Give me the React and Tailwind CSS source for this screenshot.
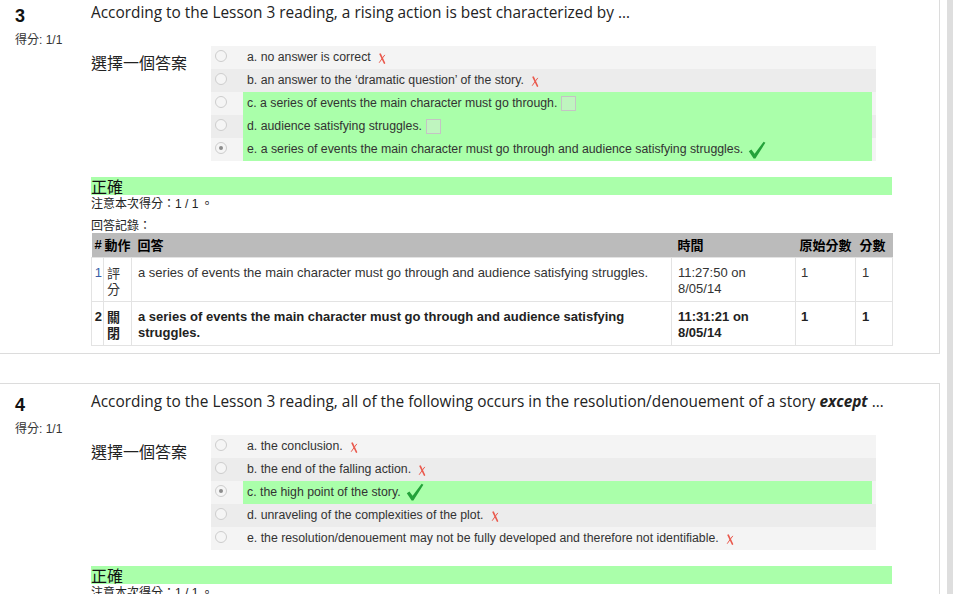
import React from "react";

const SANS = { fontFamily: '"Liberation Sans", Arial, "Noto Sans CJK TC", sans-serif' };
const OPEN = { fontFamily: '"Open Sans", "Noto Sans CJK TC", sans-serif' };
const CJK = { fontFamily: '"Noto Sans CJK TC", "Liberation Sans", sans-serif' };

function Radio({ checked }) {
  return (
    <span className="w-[12px] h-[12px] rounded-full border border-[#cdcdcd] bg-[#f5f5f5] flex items-center justify-center">
      {checked && <span className="w-[4px] h-[4px] rounded-full bg-[#8c8c8c]" />}
    </span>
  );
}

function Cross() {
  return (
    <svg width="8" height="11" viewBox="0 0 8 11" className="ml-[7px] mt-[2px] inline-block">
      <path d="M2.2 1.2 Q4 5 6.4 10" stroke="#ea5a4e" strokeWidth="1.7" fill="none" strokeLinecap="round" />
      <path d="M6.6 2.2 Q4 5.5 1.4 9.4" stroke="#ea5a4e" strokeWidth="1" fill="none" strokeLinecap="round" />
    </svg>
  );
}

function Check() {
  return (
    <svg width="18" height="18" viewBox="0 0 18 18" className="ml-[5px] inline-block">
      <path d="M0.8 10.2 L3.4 8.4 L6.6 12.8 L15.6 0.8 L17.4 1.8 L7.4 17.4 L5.6 17.4 Z" fill="#24a23a" />
    </svg>
  );
}

function EmptyBox() {
  return <span className="ml-[4px] inline-block w-[15px] h-[15px] border border-[#c4c4c4] bg-[#bff5bf]" />;
}

function Options({ items }) {
  return (
    <div className="w-[665px]">
      {items.map((it, i) => (
        <div
          key={i}
          className={`flex h-[23px] ${i % 2 === 0 ? "bg-[#f4f4f4]" : "bg-[#ececec]"}`}
        >
          <div className="w-[32px] flex items-center pl-[4px] pb-[3px]">
            <Radio checked={it.checked} />
          </div>
          <div
            className={`flex-1 mr-[4px] flex items-center pl-[4px] text-[12.3px] text-[#333] ${
              it.green ? "bg-[#aaffaa]" : ""
            }`}
            style={SANS}
          >
            <span>{it.text}</span>
            {it.mark === "x" && <Cross />}
            {it.mark === "v" && <Check />}
            {it.mark === "box" && <EmptyBox />}
          </div>
        </div>
      ))}
    </div>
  );
}

function HistoryTable() {
  const th = "text-left font-bold text-[13px] text-black h-[24px] align-middle";
  const td = "align-top border border-[#e3e3e3] pt-[7px] pb-[4px] leading-[16px] text-[13px]";
  return (
    <table className="table-fixed border-collapse w-[801px]" style={SANS}>
      <colgroup>
        <col className="w-[12px]" />
        <col className="w-[28px]" />
        <col className="w-[540px]" />
        <col className="w-[124px]" />
        <col className="w-[60px]" />
        <col className="w-[37px]" />
      </colgroup>
      <thead>
        <tr className="bg-[#bbbbbb]">
          <th className={`${th} text-[10px] pl-[3px]`}>#</th>
          <th className={`${th} whitespace-nowrap pl-[1px]`} style={CJK}>動作</th>
          <th className={`${th} pl-[6px]`} style={CJK}>回答</th>
          <th className={`${th} pl-[6px]`} style={CJK}>時間</th>
          <th className={`${th} pl-[4px] whitespace-nowrap`} style={CJK}>原始分數</th>
          <th className={`${th} pl-[4px] whitespace-nowrap`} style={CJK}>分數</th>
        </tr>
      </thead>
      <tbody className="text-[#333]">
        <tr>
          <td className={`${td} text-[#3b5ea8] text-right pr-[1px]`}>1</td>
          <td className={`${td} px-[3px] text-[12px]`} style={CJK}>評分</td>
          <td className={`${td} px-[6px]`}>a series of events the main character must go through and audience satisfying struggles.</td>
          <td className={`${td} px-[6px]`}>11:27:50 on 8/05/14</td>
          <td className={`${td} px-[5px]`}>1</td>
          <td className={`${td} px-[6px]`}>1</td>
        </tr>
        <tr className="font-bold text-[#222]">
          <td className={`${td} text-right pr-[1px]`}>2</td>
          <td className={`${td} px-[3px] text-[12px]`} style={CJK}>關閉</td>
          <td className={`${td} px-[6px]`}>a series of events the main character must go through and audience satisfying struggles.</td>
          <td className={`${td} px-[6px]`}>11:31:21 on 8/05/14</td>
          <td className={`${td} px-[5px]`}>1</td>
          <td className={`${td} px-[6px]`}>1</td>
        </tr>
      </tbody>
    </table>
  );
}

function Question({ num, title, options, history, className }) {
  return (
    <div className={`flex ${className}`}>
      <div className="w-[91px] pl-[15px] shrink-0">
        <div className="text-[18px] font-bold leading-[22px] text-[#111] pt-[3px]" style={SANS}>{num}</div>
        <div className="text-[12px] leading-[14px] text-[#333] mt-[5px]" style={SANS}>
          <span style={CJK}>得分</span>: 1/1
        </div>
      </div>
      <div className="w-[801px] shrink-0">
        <div className="text-[15.4px] leading-[22px] text-[#222] whitespace-nowrap" style={OPEN}>{title}</div>
        <div className="flex mt-[22px]">
          <div className="w-[120px] pt-[5px] text-[16px] leading-[22px] text-[#222]" style={CJK}>選擇一個答案</div>
          <Options items={options} />
        </div>
        <div className="mt-[16px] h-[18px] bg-[#aaffaa] text-[16px] leading-[18px] text-[#111]" style={CJK}>正確</div>
        <div className="text-[12px] leading-[15px] text-[#222]" style={CJK}>
          注意本次得分：<span style={SANS}>1 / 1</span> 。
        </div>
        {history && (
          <>
            <div className="text-[12px] leading-[15px] text-[#222] mt-[5px] mb-[1px]" style={CJK}>回答記錄：</div>
            <HistoryTable />
          </>
        )}
      </div>
    </div>
  );
}

export default function App() {
  const q3 = [
    { text: "a. no answer is correct", mark: "x" },
    { text: "b. an answer to the \u2018dramatic question\u2019 of the story.", mark: "x" },
    { text: "c. a series of events the main character must go through.", mark: "box", green: true },
    { text: "d. audience satisfying struggles.", mark: "box", green: true },
    { text: "e. a series of events the main character must go through and audience satisfying struggles.", mark: "v", green: true, checked: true },
  ];
  const q4 = [
    { text: "a. the conclusion.", mark: "x" },
    { text: "b. the end of the falling action.", mark: "x" },
    { text: "c. the high point of the story.", mark: "v", green: true, checked: true },
    { text: "d. unraveling of the complexities of the plot.", mark: "x" },
    { text: "e. the resolution/denouement may not be fully developed and therefore not identifiable.", mark: "x" },
  ];
  return (
    <div className="w-[953px] h-[594px] overflow-hidden bg-white flex">
      <div className="w-[940px] shrink-0">
        <Question
          num="3"
          className="border-r border-b border-[#dcdcdc] pt-[2px] pb-[7px]"
          title={"According to the Lesson 3 reading, a rising action is best characterized by \u2026"}
          options={q3}
          history
        />
        <Question
          num="4"
          className="mt-[29px] border-t border-r border-[#dcdcdc] pt-[7px] h-[260px]"
          title={
            <>
              According to the Lesson 3 reading, all of the following occurs in the resolution/denouement of a story{" "}
              <b className="italic">except</b> {"\u2026"}
            </>
          }
          options={q4}
        />
      </div>
      <div className="w-[7px] shrink-0" />
      <div className="w-[6px] shrink-0 bg-[#dedede]" />
    </div>
  );
}
